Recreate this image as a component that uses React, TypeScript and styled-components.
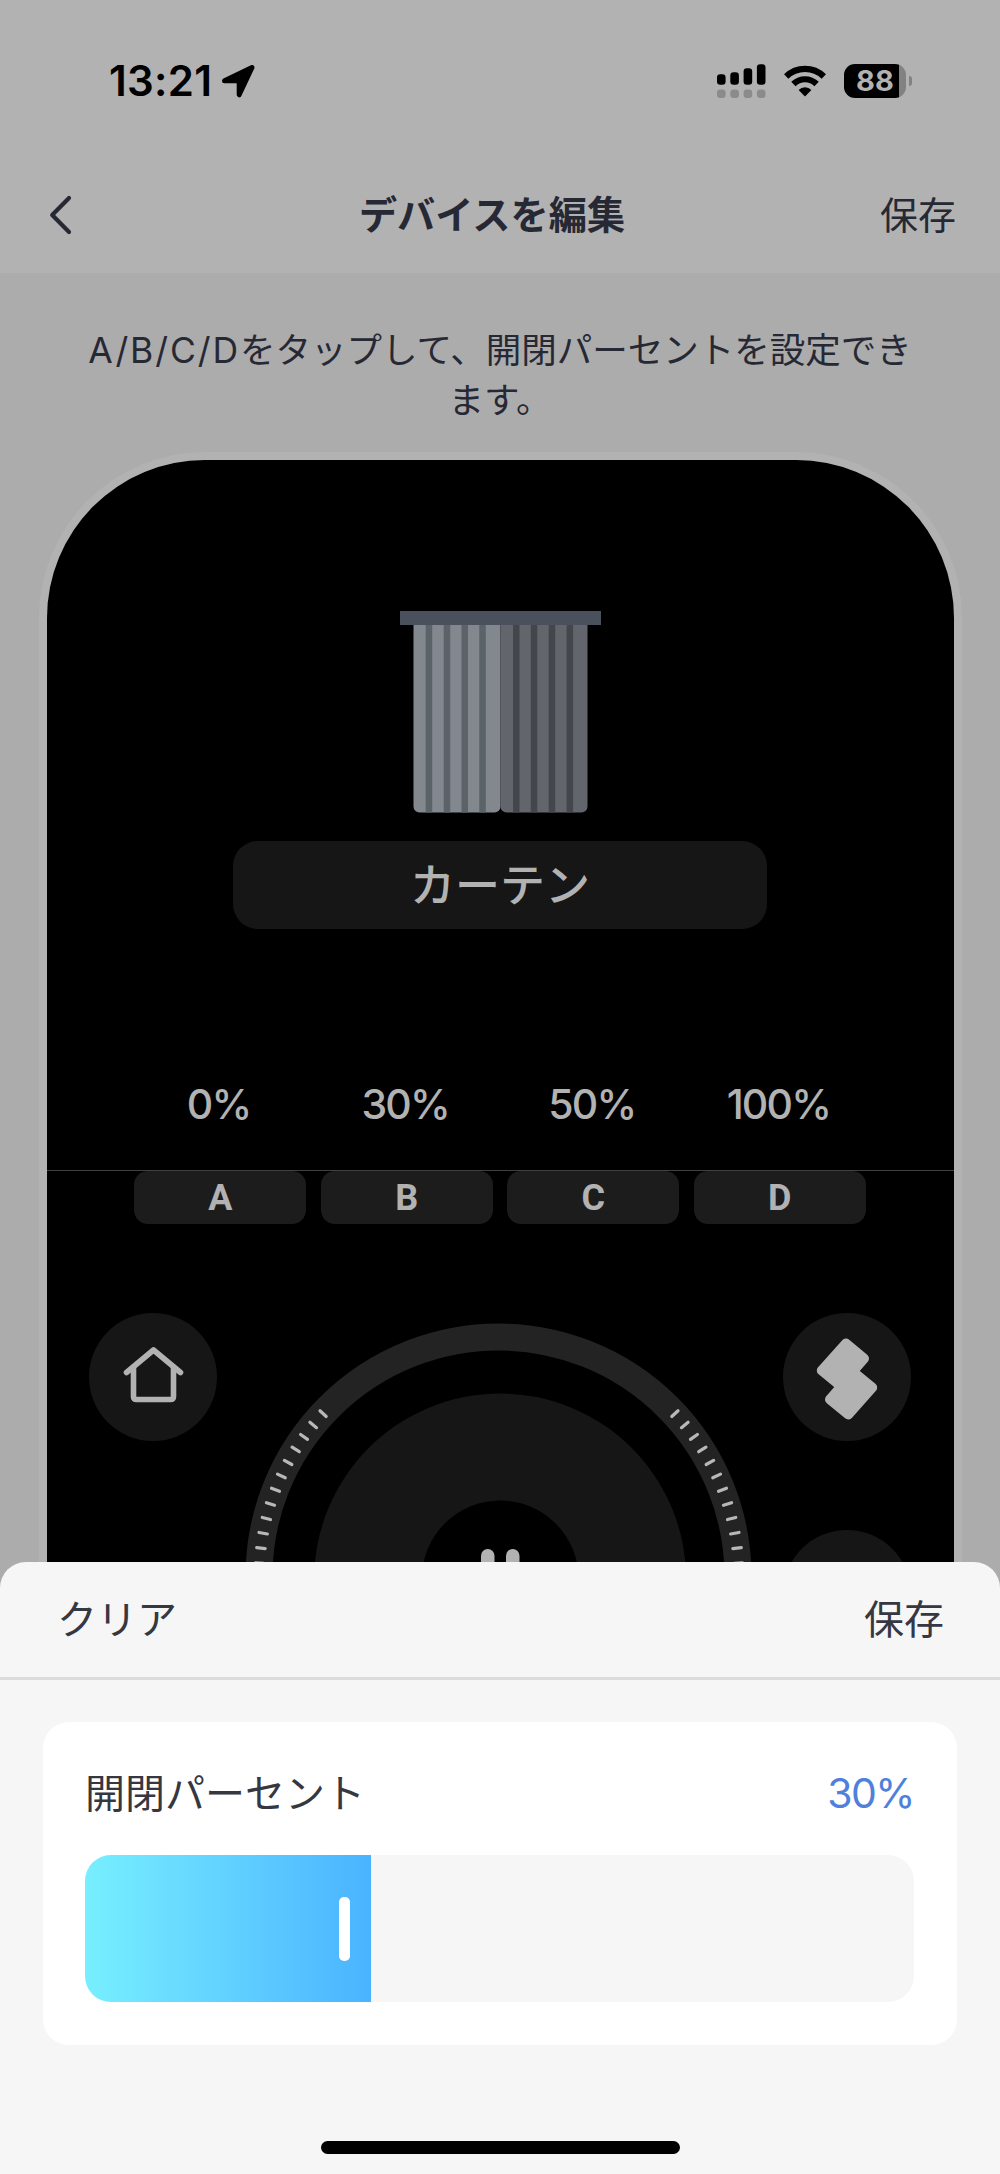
import React from "react";
import styled, { createGlobalStyle } from "styled-components";

const GlobalStyle = createGlobalStyle`
  * { box-sizing: border-box; }
  body {
    margin: 0;
    background: #acacac;
    font-family: Inter, "Noto Sans CJK JP", sans-serif;
  }
  svg { display: block; flex: none; }
`;

const Screen = styled.main`
  position: relative;
  width: 1000px;
  height: 2174px;
  overflow: hidden;
  background: #acacac;
`;

const TopArea = styled.header`
  height: 273px;
  background: #b2b2b2;
`;

const StatusBar = styled.div`
  display: flex;
  align-items: center;
  height: 162px;
  padding: 0 88px 0 109px;
`;

const Clock = styled.span`
  width: 112px;
  font-size: 42px;
  font-weight: 600;
  line-height: 50px;
  letter-spacing: 0.3px;
  white-space: nowrap;
  color: #000;
`;

const StatusIcons = styled.div`
  display: flex;
  align-items: center;
  gap: 18px;
  margin-left: auto;
`;

const BatteryGroup = styled.div`
  display: flex;
  align-items: center;
  gap: 3px;
`;

const BatteryBody = styled.div`
  display: flex;
  align-items: center;
  justify-content: center;
  width: 62px;
  height: 34px;
  border-radius: 11px;
  background: linear-gradient(to right, #000 55px, #828282 55px);
  color: #b2b2b2;
  font-size: 29px;
  font-weight: 700;
  line-height: 34px;
`;

const BatteryTip = styled.div`
  width: 3px;
  height: 10px;
  border-radius: 0 4px 4px 0;
  background: #828282;
`;

const NavBar = styled.nav`
  display: grid;
  grid-template-columns: 120px 1fr 134px;
  align-items: center;
  height: 106px;
  padding: 0 44px 0 42px;
  color: #262934;
`;

const NavTitle = styled.h1`
  margin: 0;
  text-align: center;
  font-size: 38.2px;
  line-height: 56px;
  font-weight: 700;
`;

const TextButton = styled.button<{ $size: number }>`
  border: 0;
  padding: 0;
  background: none;
  font-family: inherit;
  font-size: ${(p) => p.$size}px;
  line-height: 56px;
  color: inherit;
  text-align: right;
  white-space: nowrap;
`;

const BackButton = styled.button`
  display: flex;
  border: 0;
  padding: 0;
  background: none;
`;

const Instruction = styled.p`
  margin: 53px 80px 0;
  height: 126px;
  text-align: center;
  color: #262934;
  font-size: 35.5px;
  line-height: 50px;
`;

const LetterKeys = styled.span`
  letter-spacing: 1.9px;
`;

const Remote = styled.section`
  width: 923px;
  height: 1300px;
  margin: 0 0 0 38.5px;
  padding: 8px 8px 0;
  border-radius: 166px 166px 0 0;
  background: #b2b2b2;
`;

const RemoteFace = styled.div`
  display: flex;
  flex-direction: column;
  align-items: center;
  height: 100%;
  padding-top: 151px;
  border-radius: 158px 158px 0 0;
  background: #000;
  color: #b2b2b2;
`;

const DeviceName = styled.div`
  display: flex;
  flex: none;
  align-items: center;
  justify-content: center;
  width: 534px;
  height: 88px;
  margin-top: 28px;
  padding-top: 2px;
  border-radius: 25px;
  background: #161616;
  font-size: 45px;
  font-weight: 500;
  line-height: 86px;
`;

const Presets = styled.div`
  display: grid;
  flex: none;
  grid-template-columns: repeat(4, 186.6px);
  justify-content: center;
  height: 241px;
  padding-top: 149.500px;
  text-align: center;
`;

const PresetValue = styled.div`
  padding-right: 3px;
  font-size: 41px;
  font-weight: 500;
  line-height: 50px;
  letter-spacing: -1.800px;
`;

const KeyRow = styled.div`
  display: flex;
  flex: none;
  justify-content: center;
  gap: 14.5px;
  width: 100%;
  border-top: 1px solid #404040;
`;

const Key = styled.div`
  width: 172px;
  height: 53px;
  border-radius: 14px;
  background: #1c1c1c;
  font-family: Roboto, sans-serif;
  font-size: 36px;
  font-weight: 700;
  line-height: 54px;
  text-align: center;
`;

const Controls = styled.div`
  display: grid;
  flex: none;
  grid-template-columns: 128px 1fr 128px;
  align-items: start;
  width: 100%;
  padding: 89px 43px 0 42px;
`;

const SideButtons = styled.div`
  display: flex;
  flex-direction: column;
  gap: 89px;
`;

const RoundButton = styled.div`
  width: 128px;
  height: 128px;
  border-radius: 50%;
  background: #161616;
`;

const DialHolder = styled.div`
  display: flex;
  justify-content: center;
  padding: 10px 0 0 1px;
`;

const Sheet = styled.section`
  position: absolute;
  left: 0;
  right: 0;
  bottom: 0;
  display: flex;
  flex-direction: column;
  align-items: center;
  height: 612px;
  border-radius: 26px 26px 0 0;
  background: #f6f6f7;
  color: #353741;
`;

const SheetHeader = styled.div`
  display: flex;
  align-items: flex-start;
  justify-content: space-between;
  width: 100%;
  height: 118px;
  padding: 30px 56px 0 57px;
  border-bottom: 3px solid #dcdcdd;
`;

const Card = styled.div`
  width: 914px;
  height: 323px;
  margin-top: 42px;
  padding: 44px 43px 0 42px;
  border-radius: 26px;
  background: #fff;
`;

const CardHeader = styled.div`
  display: flex;
  justify-content: space-between;
  height: 89px;
  font-size: 40px;
  line-height: 56px;
`;

const Percent = styled.span`
  color: #4e80dc;
  font-size: 41px;
  line-height: 55px;
  letter-spacing: -1.6px;
`;

const Track = styled.div`
  height: 147px;
  border-radius: 26px;
  overflow: hidden;
  background: #f6f6f7;
`;

const Fill = styled.div`
  display: flex;
  align-items: center;
  justify-content: flex-end;
  width: 285.5px;
  height: 100%;
  padding-right: 21px;
  background: linear-gradient(to right, #78efff, #4ab3ff);
`;

const Handle = styled.div`
  width: 11px;
  height: 64px;
  border-radius: 5px;
  background: #fff;
`;

const HomeIndicator = styled.div`
  width: 359px;
  height: 13px;
  margin-top: auto;
  margin-bottom: 20px;
  border-radius: 7px;
  background: #000;
`;

function LocationIcon() {
  return (
    <svg width="34" height="33" viewBox="0 0 34 33">
      <path
        d="M3.500 15.700 31 2.500 18.200 29.800V15.700Z"
        stroke="#000"
        strokeWidth="5"
        strokeLinejoin="round"
      />
    </svg>
  );
}

function SignalIcon() {
  const heights = [10.5, 12.5, 16.5, 20.5];
  return (
    <svg width="49" height="34" viewBox="0 0 49 34">
      {heights.map((h, i) => (
        <g key={h}>
          <rect x={i * 13.3} y={20.7 - h} width="8.6" height={h} rx="3.2" />
          <rect x={i * 13.3} y="25.6" width="8.6" height="8.4" rx="3.2" fill="#8b8b8b" />
        </g>
      ))}
    </svg>
  );
}

function WifiIcon() {
  return (
    <svg width="42" height="32" viewBox="0 0 42 32" fill="none" stroke="#000">
      <path d="M2.2 11.4A27 27 0 0 1 39.8 11.4" strokeWidth="6.2" />
      <path d="M9.4 19A16.6 16.6 0 0 1 32.6 19" strokeWidth="6.2" />
      <path d="M21 31.5 14.6 25A9 9 0 0 1 27.4 25Z" fill="#000" stroke="none" />
    </svg>
  );
}

function BackIcon() {
  return (
    <svg width="32" height="42" viewBox="0 0 32 42">
      <path
        d="M27 4 10.2 21 27 38"
        fill="none"
        stroke="#262934"
        strokeWidth="4.2"
        strokeLinecap="round"
        strokeLinejoin="round"
      />
    </svg>
  );
}

function CurtainIcon() {
  const left = [25.7, 43.7, 61.5, 79.3];
  const right = [113, 130.8, 148.7, 166.6];
  return (
    <svg width="201" height="202" viewBox="0 0 201 202">
      <path d="M13.5 10H100.5V195.5a6 6 0 0 1-6 6H19.500a6 6 0 0 1-6-6Z" fill="#83888f" />
      <path d="M100.500 10H187.500V195.500a6 6 0 0 1-6 6H106.500a6 6 0 0 1-6-6Z" fill="#62656b" />
      {left.map((x) => (
        <rect key={x} x={x} y="13" width="6.5" height="188.500" fill="#5b6268" />
      ))}
      {right.map((x) => (
        <rect key={x} x={x} y="13" width="6.5" height="188.500" fill="#43474c" />
      ))}
      <rect width="201" height="14" fill="#4b515c" />
    </svg>
  );
}

function HomeIcon() {
  return (
    <svg
      width="128"
      height="128"
      viewBox="0 0 128 128"
      fill="none"
      stroke="#b2b2b2"
      strokeWidth="5.6"
      strokeLinecap="round"
      strokeLinejoin="round"
    >
      <path d="M37.500 59.500 64.500 37 91.500 59.500" />
      <path d="M44.500 54V83.500q0 3 3 3H81.500q3 0 3-3V54" />
    </svg>
  );
}

function BrandIcon() {
  return (
    <svg width="128" height="128" viewBox="783 1312.5 128 128">
      <path
        d="M846 1343 864 1358 852.7 1371 872.2 1387 848.300 1414 830 1399 841.300 1386 821.800 1370Z"
        fill="#b2b2b2"
        stroke="#b2b2b2"
        strokeWidth="10"
        strokeLinejoin="round"
      />
    </svg>
  );
}

function Dial() {
  const cx = 253.5;
  const cy = 253.5;
  const ticks = Array.from({ length: 13 }, (_, i) => 42.8 - i * 3.6);
  return (
    <svg width="510" height="510" viewBox="0 0 510 510">
      <circle cx={cx} cy={cy} r="239.5" fill="none" stroke="#232323" strokeWidth="27" />
      {ticks.flatMap((deg) => {
        const a = (deg * Math.PI) / 180;
        return [-1, 1].map((side) => (
          <line
            key={`${side}${deg}`}
            x1={cx + 0.5 + side * Math.cos(a) * 235.500}
            y1={cy - Math.sin(a) * 235.500}
            x2={cx + 0.5 + side * Math.cos(a) * 244}
            y2={cy - Math.sin(a) * 244}
            stroke="#b8b8b8"
            strokeWidth="3.2"
            strokeLinecap="round"
          />
        ));
      })}
      <circle cx={cx + 1.700} cy={cy + 3} r="186" fill="#161616" />
      <circle cx={cx + 1.700} cy={cy + 2.500} r="78.500" fill="#000" />
      <rect x="236" y="226" width="13.500" height="60" rx="6.700" fill="#b2b2b2" />
      <rect x="261" y="226" width="13.500" height="60" rx="6.700" fill="#b2b2b2" />
    </svg>
  );
}

const presets = [
  { key: "A", value: "0%" },
  { key: "B", value: "30%" },
  { key: "C", value: "50%" },
  { key: "D", value: "100%" },
];

export default function App() {
  return (
    <>
      <GlobalStyle />
      <Screen>
        <TopArea>
          <StatusBar>
            <Clock>13:21</Clock>
            <LocationIcon />
            <StatusIcons>
              <SignalIcon />
              <WifiIcon />
              <BatteryGroup>
                <BatteryBody>88</BatteryBody>
                <BatteryTip />
              </BatteryGroup>
            </StatusIcons>
          </StatusBar>
          <NavBar>
            <BackButton aria-label="戻る">
              <BackIcon />
            </BackButton>
            <NavTitle>デバイスを編集</NavTitle>
            <TextButton $size={38}>保存</TextButton>
          </NavBar>
        </TopArea>
        <Instruction>
          <LetterKeys>A/B/C/D</LetterKeys>をタップして、開閉パーセントを設定できます。
        </Instruction>
        <Remote>
          <RemoteFace>
            <CurtainIcon />
            <DeviceName>カーテン</DeviceName>
            <Presets>
              {presets.map((p) => (
                <PresetValue key={p.key}>{p.value}</PresetValue>
              ))}
            </Presets>
            <KeyRow>
              {presets.map((p) => (
                <Key key={p.key}>{p.key}</Key>
              ))}
            </KeyRow>
            <Controls>
              <RoundButton>
                <HomeIcon />
              </RoundButton>
              <DialHolder>
                <Dial />
              </DialHolder>
              <SideButtons>
                <RoundButton>
                  <BrandIcon />
                </RoundButton>
                <RoundButton />
              </SideButtons>
            </Controls>
          </RemoteFace>
        </Remote>
        <Sheet>
          <SheetHeader>
            <TextButton $size={40}>クリア</TextButton>
            <TextButton $size={40}>保存</TextButton>
          </SheetHeader>
          <Card>
            <CardHeader>
              <span>開閉パーセント</span>
              <Percent>30%</Percent>
            </CardHeader>
            <Track>
              <Fill>
                <Handle />
              </Fill>
            </Track>
          </Card>
          <HomeIndicator />
        </Sheet>
      </Screen>
    </>
  );
}
